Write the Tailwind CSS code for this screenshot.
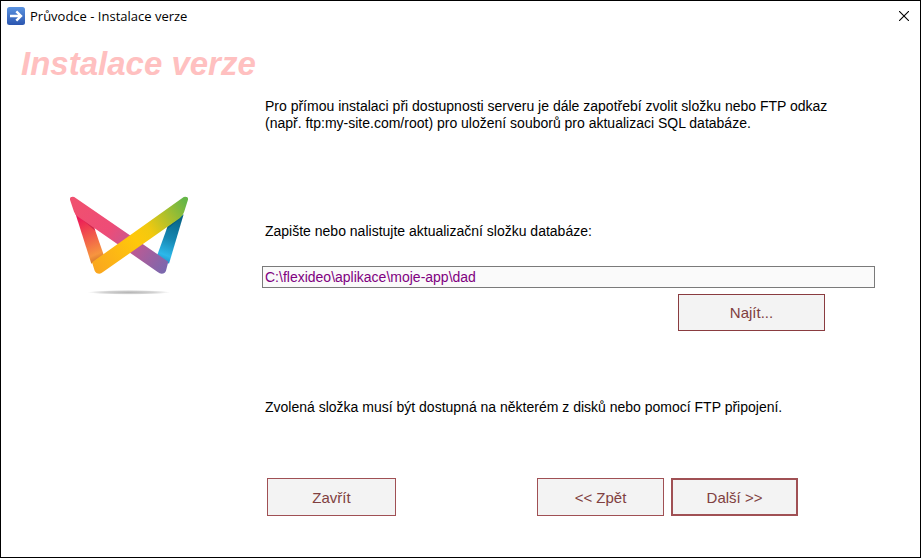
<!DOCTYPE html>
<html lang="cs">
<head>
    <meta charset="UTF-8">
    <meta name="viewport" content="width=device-width, initial-scale=1.0">
    <title>Průvodce - Instalace verze</title>
    <script src="https://cdn.jsdelivr.net/npm/@tailwindcss/browser@4"></script>
</head>
<body class="bg-white text-black font-['Liberation_Sans',Arial,sans-serif]">
    <div class="min-h-screen flex flex-col border border-black">
        <!-- Title bar -->
        <header class="flex items-center h-[30px] pl-[6px] pr-[11px] font-['Open_Sans','Noto_Sans',sans-serif]">
            <svg class="w-[18px] h-[18px] shrink-0" viewBox="0 0 18 18" aria-hidden="true">
                <defs>
                    <linearGradient id="appIcon" x1="0" y1="0" x2="0" y2="1">
                        <stop offset="0" stop-color="#5b93e0"/>
                        <stop offset="1" stop-color="#2b56b0"/>
                    </linearGradient>
                </defs>
                <rect width="18" height="18" rx="2.5" fill="url(#appIcon)"/>
                <path d="M3 9H14M9.3 4.3L14 9L9.3 13.7" fill="none" stroke="#fff" stroke-width="2.4"/>
            </svg>
            <span class="ml-[5px] text-[13px] leading-4">Průvodce - Instalace verze</span>
            <button type="button" aria-label="Zavřít okno" class="ml-auto">
                <svg class="w-[10px] h-[10px]" viewBox="0 0 10 10">
                    <path d="M0 0L10 10M10 0L0 10" stroke="#000" stroke-width="1.1"/>
                </svg>
            </button>
        </header>

        <h1 class="mt-[14px] ml-5 text-[33px] leading-[38px] font-bold italic text-[#ffc0c0]">Instalace verze</h1>

        <main class="flex-1 flex">
            <!-- Logo -->
            <aside class="w-[261px] shrink-0 pl-[59px] pt-[102px]">
                <svg class="w-[140px] h-[120px]" viewBox="0 0 420 360" role="img" aria-label="Logo">
                    <defs>
                        <linearGradient id="pinkBand" gradientUnits="userSpaceOnUse" x1="40" y1="60" x2="320" y2="250">
                            <stop offset="0" stop-color="#f0506f"/>
                            <stop offset="0.38" stop-color="#ee4c77"/>
                            <stop offset="0.6" stop-color="#c9578f"/>
                            <stop offset="1" stop-color="#7a68ae"/>
                        </linearGradient>
                        <linearGradient id="yellowBand" gradientUnits="userSpaceOnUse" x1="100" y1="250" x2="382" y2="60">
                            <stop offset="0" stop-color="#faa61f"/>
                            <stop offset="0.45" stop-color="#ffc80a"/>
                            <stop offset="0.6" stop-color="#f2c90f"/>
                            <stop offset="1" stop-color="#66b648"/>
                        </linearGradient>
                        <linearGradient id="redLeg" gradientUnits="userSpaceOnUse" x1="60" y1="95" x2="115" y2="225">
                            <stop offset="0" stop-color="#ec1558"/>
                            <stop offset="0.5" stop-color="#f15f4a"/>
                            <stop offset="0.87" stop-color="#f7953f"/>
                            <stop offset="1" stop-color="#d87a2c"/>
                        </linearGradient>
                        <linearGradient id="blueLeg" gradientUnits="userSpaceOnUse" x1="355" y1="100" x2="310" y2="225">
                            <stop offset="0" stop-color="#086487"/>
                            <stop offset="0.5" stop-color="#1687b2"/>
                            <stop offset="0.88" stop-color="#2cb8ea"/>
                            <stop offset="1" stop-color="#249bd0"/>
                        </linearGradient>
                        <radialGradient id="shadow">
                            <stop offset="0" stop-color="#b5b5b5"/>
                            <stop offset="0.6" stop-color="#d2d2d2"/>
                            <stop offset="1" stop-color="#fff"/>
                        </radialGradient>
                    </defs>
                    <path d="M45 82L102 126L132 212L94 236Z" fill="url(#redLeg)"/>
                    <path d="M45 84L102 126L106 138Z" fill="#c0184f" opacity="0.65"/>
                    <path d="M371 88L323 124L291 212L327 236Z" fill="url(#blueLeg)"/>
                    <path d="M371 90L323 124L319 136Z" fill="#06506d" opacity="0.5"/>
                    <path d="M30 44Q29 35 38 35Q43 35 47 39L325 230L318 257Q315 266 305 266Q299 266 293 261L54 95Q45 89 42 80Z" fill="url(#pinkBand)"/>
                    <path d="M384 44Q385 35 376 35Q371 35 367 39L96 232L104 257Q108 266 118 266Q123 266 129 261L360 99Q369 92 372 82Z" fill="url(#yellowBand)"/>
                    <ellipse cx="207" cy="322" rx="124" ry="7" fill="url(#shadow)"/>
                </svg>
            </aside>

            <!-- Wizard step -->
            <form class="flex-1 pt-[15px] pr-[45px] text-[14px] leading-[17px]">
                <p class="pl-[3px]">
                    Pro přímou instalaci při dostupnosti serveru je dále zapotřebí zvolit složku nebo FTP odkaz<br>
                    (např. ftp:my-site.com/root) pro uložení souborů pro aktualizaci SQL databáze.
                </p>

                <label for="folder" class="block mt-[91px] pl-[3px]">Zapište nebo nalistujte aktualizační složku databáze:</label>
                <input id="folder" type="text" value="C:\flexideo\aplikace\moje-app\dad"
                    class="block w-full h-[22px] mt-[26px] px-[2px] border border-[#7a7a7a] bg-[#fafafa] text-[14px] text-[#800080]">
                <div class="flex justify-end mt-[6px] pr-[50px]">
                    <button type="button" class="w-[147px] h-[37px] border border-[#8a3c40] bg-[#f3f3f3] text-[15px] text-[#804040]">Najít...</button>
                </div>

                <p class="mt-[68px] pl-[3px]">Zvolená složka musí být dostupná na některém z disků nebo pomocí FTP připojení.</p>

                <div class="flex mt-[62px] pl-[5px] pr-[77px] text-[15px] text-[#804040]">
                    <button type="button" class="w-[129px] h-[38px] border border-[#a05054] bg-[#f3f3f3]">Zavřít</button>
                    <button type="button" class="w-[127px] h-[38px] ml-auto border border-[#a05054] bg-[#f3f3f3]">&lt;&lt; Zpět</button>
                    <button type="submit" class="w-[127px] h-[38px] ml-[7px] border-2 border-[#a05054] bg-[#f3f3f3]">Další &gt;&gt;</button>
                </div>
            </form>
        </main>
    </div>
</body>
</html>
